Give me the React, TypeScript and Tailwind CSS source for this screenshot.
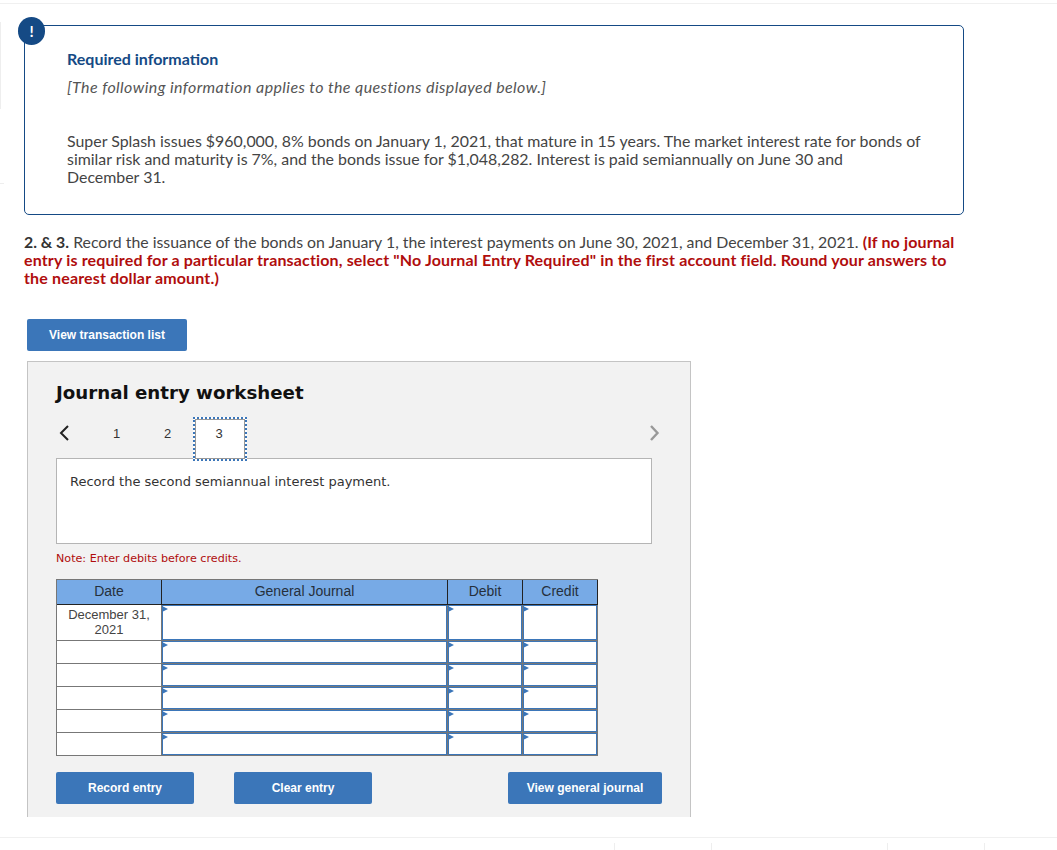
import React from 'react';

const rows = [
  { date: 'December 31, 2021', tall: true },
  { date: '' },
  { date: '' },
  { date: '' },
  { date: '' },
  { date: '' },
];

function InputCell({ width }: { width: string }) {
  return (
    <div className={`${width} relative h-full bg-[#777] pr-px pb-px`}>
      <div className="h-full w-full border border-[#3b76b9] bg-white" />
      {/* little caret in the corner of the field */}
      <span className="absolute left-0 top-px h-0 w-0 border-y-[3.5px] border-l-[6px] border-y-transparent border-l-[#3b76b9]" />
    </div>
  );
}

function ActionButton({ label, width }: { label: string; width: string }) {
  return (
    <button className={`${width} h-8 rounded-[2px] bg-[#3b76b9] text-[12px] font-bold text-white`}>
      {label}
    </button>
  );
}

export default function App() {
  return (
    <div className="relative h-[850px] w-[1057px] overflow-hidden bg-white font-['Lato',sans-serif]">
      {/* faint page chrome */}
      <div className="h-[4px] border-b border-[#f0f0f0]" />
      <div className="absolute left-0 top-[22px] h-[87px] w-px bg-[#eeeeee]" />
      <div className="absolute left-0 top-[183px] h-px w-1 bg-[#eeeeee]" />

      <div className="pl-[24px] pt-[21px]">
        {/* Required information box */}
        <div className="relative h-[190px] w-[940px] rounded-[5px] border border-[#154a85] pl-[42px] pt-[24px]">
          <div className="absolute left-[-7px] top-[-9px] flex h-[28px] w-[27px] items-center justify-center rounded-full bg-[#154a85] text-[15px] font-bold text-white">
            !
          </div>
          <p className="text-[16px] font-bold leading-[18px] text-[#154a85]">Required information</p>
          <p className="mt-[10px] text-[16px] italic leading-[18px] tracking-[0.4px] text-[#555]">
            [The following information applies to the questions displayed below.]
          </p>
          <p className="mt-[36px] text-[15.92px] leading-[18px] text-[#444]">
            Super Splash issues $960,000, 8% bonds on January 1, 2021, that mature in 15 years. The market interest rate for bonds of
            <br />
            similar risk and maturity is 7%, and the bonds issue for $1,048,282. Interest is paid semiannually on June 30 and
            <br />
            December 31.
          </p>
        </div>

        {/* Question text */}
        <p className="mt-[18px] w-[1000px] text-[15.85px] leading-[18px] text-[#444]">
          <b className="text-[#333]">2. &amp; 3.</b> Record the issuance of the bonds on January 1, the interest payments on June 30, 2021, and December 31, 2021.{' '}
          <b className="text-[16px] tracking-[0.15px] text-[#b00d0d]">
            (If no journal
            <br />
            entry is required for a particular transaction, select "No Journal Entry Required" in the first account field. Round your answers to
            <br />
            the nearest dollar amount.)
          </b>
        </p>

        <div className="ml-[3px] mt-[32px]">
          <button className="h-8 w-[160px] rounded-[2px] bg-[#3b76b9] font-['Liberation_Sans',sans-serif] text-[12px] font-bold text-white">
            View transaction list
          </button>

          {/* Worksheet panel, clipped at the bottom */}
          <div className="mt-[10px] h-[456px] w-[664px] border-x border-t border-[#c4c4c4] bg-[#f2f2f2] pl-[28px] pt-[19px]">
            <h2 className="font-['DejaVu_Sans',sans-serif] text-[18.2px] font-bold leading-[24px] text-[#111]">Journal entry worksheet</h2>

            <div className="mt-[12px] flex h-[44px] w-[596px] items-start font-['Liberation_Sans',sans-serif] text-[13px] leading-[34px] text-[#333]">
              <svg width="12" height="16" viewBox="0 0 12 16" className="ml-[2px] mt-[8px]" fill="none" stroke="#222" strokeWidth="2">
                <path d="M10 1 L3 8 L10 15" />
              </svg>
              <span className="ml-[21px] w-[51px] text-center">1</span>
              <span className="w-[51px] text-center">2</span>
              <span className="h-[44px] w-[54px] border-2 border-dotted border-[#3b76b9] bg-white pr-[2px] text-center leading-[30px] outline outline-1 -outline-offset-3 outline-[#999]">3</span>
              <svg width="14" height="16" viewBox="0 0 14 16" className="ml-auto mr-[-10px] mt-[8px]" fill="none" stroke="#999" strokeWidth="2.4">
                <path d="M3 1 L9.5 8 L3 15" />
              </svg>
            </div>

            <div className="-mt-[3px] h-[86px] w-[596px] border border-[#b5b5b5] bg-white pl-[13px] pt-[15px] font-['DejaVu_Sans',sans-serif] text-[13px] leading-[16px] text-[#333]">
              Record the second semiannual interest payment.
            </div>

            <p className="mt-[8px] font-['DejaVu_Sans',sans-serif] text-[11.15px] leading-[14px] text-[#b00d0d]">Note: Enter debits before credits.</p>

            {/* Journal table */}
            <div className="mt-[13px] w-[542px] border-t border-l border-[#777] font-['Liberation_Sans',sans-serif] text-[14px]">
              <div className="flex h-[25px] border-b border-[#222] bg-[#77aae6] text-center leading-[23px] text-[#26303c]">
                <div className="w-[105px] border-r border-[#222]">Date</div>
                <div className="w-[286px] border-r border-[#222]">General Journal</div>
                <div className="w-[75px] border-r border-[#222]">Debit</div>
                <div className="w-[75px] border-r border-[#222]">Credit</div>
              </div>
              {rows.map((row, i) => (
                <div key={i} className={`flex ${row.tall ? 'h-[36px]' : 'h-[23px]'}`}>
                  <div className="w-[105px] border-r border-b border-[#777] bg-white text-center text-[13px] leading-[15px]">
                    <div className="px-[8px] pt-[2px] text-[#444]">{row.date}</div>
                  </div>
                  <InputCell width="w-[286px]" />
                  <InputCell width="w-[75px]" />
                  <InputCell width="w-[75px]" />
                </div>
              ))}
            </div>

            <div className="mt-[16px] flex w-[606px] font-['Liberation_Sans',sans-serif]">
              <ActionButton label="Record entry" width="w-[138px]" />
              <div className="ml-[40px]">
                <ActionButton label="Clear entry" width="w-[138px]" />
              </div>
              <div className="ml-auto">
                <ActionButton label="View general journal" width="w-[154px]" />
              </div>
            </div>
          </div>
        </div>
      </div>

      {/* bottom chrome */}
      <div className="absolute bottom-0 left-0 right-0 h-[13px] border-t border-[#f0f0f0]">
        <div className="absolute bottom-0 left-[614px] h-[7px] w-px bg-[#eeeeee]" />
        <div className="absolute bottom-0 left-[711px] h-[7px] w-px bg-[#eeeeee]" />
        <div className="absolute bottom-0 left-[887px] h-[7px] w-px bg-[#eeeeee]" />
        <div className="absolute bottom-0 left-[984px] h-[7px] w-px bg-[#eeeeee]" />
      </div>
    </div>
  );
}
